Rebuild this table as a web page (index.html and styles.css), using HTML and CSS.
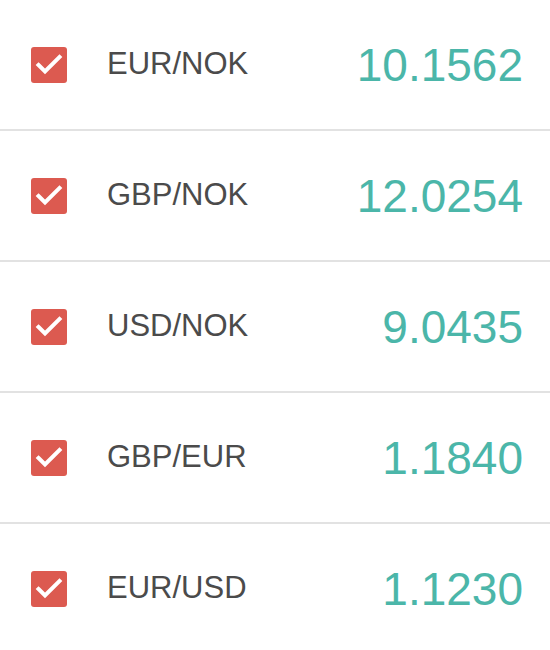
FILE: index.html
```html
<!DOCTYPE html>
<html>
<head>
<meta charset="utf-8">
<link rel="stylesheet" href="styles.css">
</head>
<body>
<ul class="list">
  <li class="row">
    <span class="check"><svg viewBox="0 0 36 36" width="36" height="36"><path d="M7.5 18 L14 24.5 L28.5 10" fill="none" stroke="#fff" stroke-width="4" stroke-linecap="square"/></svg></span>
    <span class="pair">EUR/NOK</span>
    <span class="rate">10.1562</span>
  </li>
  <li class="row">
    <span class="check"><svg viewBox="0 0 36 36" width="36" height="36"><path d="M7.5 18 L14 24.5 L28.5 10" fill="none" stroke="#fff" stroke-width="4" stroke-linecap="square"/></svg></span>
    <span class="pair">GBP/NOK</span>
    <span class="rate">12.0254</span>
  </li>
  <li class="row">
    <span class="check"><svg viewBox="0 0 36 36" width="36" height="36"><path d="M7.5 18 L14 24.5 L28.5 10" fill="none" stroke="#fff" stroke-width="4" stroke-linecap="square"/></svg></span>
    <span class="pair">USD/NOK</span>
    <span class="rate">9.0435</span>
  </li>
  <li class="row">
    <span class="check"><svg viewBox="0 0 36 36" width="36" height="36"><path d="M7.5 18 L14 24.5 L28.5 10" fill="none" stroke="#fff" stroke-width="4" stroke-linecap="square"/></svg></span>
    <span class="pair">GBP/EUR</span>
    <span class="rate">1.1840</span>
  </li>
  <li class="row">
    <span class="check"><svg viewBox="0 0 36 36" width="36" height="36"><path d="M7.5 18 L14 24.5 L28.5 10" fill="none" stroke="#fff" stroke-width="4" stroke-linecap="square"/></svg></span>
    <span class="pair">EUR/USD</span>
    <span class="rate">1.1230</span>
  </li>
</ul>
</body>
</html>
```
FILE: styles.css
```css
html, body {
  margin: 0;
  padding: 0;
  background: #fff;
  font-family: "Liberation Sans", Arial, sans-serif;
}
.list {
  list-style: none;
  margin: 0;
  padding: 0;
}
.row {
  display: flex;
  align-items: center;
  height: 129px;
  padding: 0 27px 0 31px;
  border-bottom: 2px solid #e2e2e2;
}
.row:last-child {
  border-bottom: none;
}
.check {
  width: 36px;
  height: 36px;
  border-radius: 3px;
  background: #dc5a50;
  display: flex;
  flex: none;
}
.pair {
  margin-left: 40px;
  font-size: 31px;
  line-height: 1;
  margin-top: -3px;
  color: #4b4b4b;
  flex: 1;
}
.rate {
  font-size: 46px;
  line-height: 1;
  color: #4bb6a9;
}
```
